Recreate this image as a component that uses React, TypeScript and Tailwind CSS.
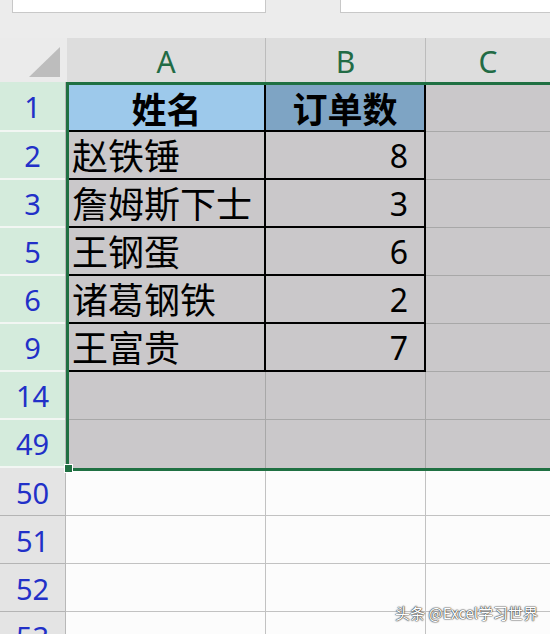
import React from "react";

const CJK = { fontFamily: '"Noto Sans CJK SC", "Noto Sans", sans-serif' };
const NUM = { fontFamily: '"Noto Sans", "Open Sans", sans-serif' };

type R = { n: string; a: string; b: string };
const tableRows: R[] = [
  { n: "2", a: "赵铁锤", b: "8" },
  { n: "3", a: "詹姆斯下士", b: "3" },
  { n: "5", a: "王钢蛋", b: "6" },
  { n: "6", a: "诸葛钢铁", b: "2" },
  { n: "9", a: "王富贵", b: "7" },
];

function RowHead({ n, h, sel }: { n: string; h: string; sel?: boolean }) {
  return (
    <div
      className={`${h} flex items-center justify-center pt-[3px] text-[29px] leading-[1.2] text-[#2230c8] ${
        sel ? "bg-[#d4ebdc] border-b-2 border-[#f2f6f3]" : "bg-[#e4e4e4] border-b border-[#b4b4b4]"
      }`}
      style={NUM}
    >
      {n}
    </div>
  );
}

export default function App() {
  return (
    <div className="relative h-[634px] w-[550px] overflow-hidden bg-[#ececec] select-none">
      {/* top bar */}
      <div className="flex h-[38px] items-start">
        <div className="ml-[12px] h-[13px] w-[254px] border-x border-b border-[#c8c8c8] bg-white" />
        <div className="ml-[74px] h-[13px] flex-1 border-l border-b border-[#c8c8c8] bg-white" />
      </div>

      {/* column headers */}
      <div className="flex h-[44px]">
        <div className="relative w-[67px] bg-[#ebebeb]">
          <svg className="absolute left-[29px] top-[9px]" width="32" height="31" viewBox="0 0 32 31">
            <polygon points="0,30 31,0 31,30" fill="#bdbdbd" />
          </svg>
        </div>
        <div className="flex w-[199px] items-center justify-center border-r border-[#bcbcbc] bg-[#dddddd] pt-[2px] text-[30px] text-[#226b45]" style={NUM}>
          A
        </div>
        <div className="flex w-[160px] items-center justify-center border-r border-[#bcbcbc] bg-[#dddddd] pt-[2px] text-[30px] text-[#226b45]" style={NUM}>
          B
        </div>
        <div className="flex flex-1 items-center justify-center bg-[#dddddd] pt-[2px] text-[30px] text-[#226b45]" style={NUM}>
          C
        </div>
      </div>

      {/* body */}
      <div className="flex">
        {/* row headers */}
        <div className="flex w-[66px] flex-col border-r border-[#b8b8b8]">
          <RowHead n="1" h="h-[50px]" sel />
          {tableRows.map((r) => (
            <RowHead key={r.n} n={r.n} h="h-[48px]" sel />
          ))}
          <RowHead n="14" h="h-[48px]" sel />
          <RowHead n="49" h="h-[48px]" sel />
          <RowHead n="50" h="h-[48px]" />
          <RowHead n="51" h="h-[48px]" />
          <RowHead n="52" h="h-[48px]" />
          <RowHead n="53" h="h-[48px]" />
        </div>

        {/* cells */}
        <div className="flex flex-1 flex-col">
          <div className="relative border-y-[3px] border-l-[3px] border-[#1f7042] bg-[#cac8ca]">
            {/* header row */}
            <div className="flex h-[47px]">
              <div className="flex w-[197px] items-center justify-center border-r-2 border-b-2 border-black bg-[#9dc9eb] text-[35px] leading-[1.2] font-bold text-black" style={CJK}>
                姓名
              </div>
              <div className="flex w-[160px] items-center justify-center border-r-2 border-b-2 border-black bg-[#7ea4c4] text-[35px] leading-[1.2] font-bold text-black" style={CJK}>
                订单数
              </div>
              <div className="flex-1 border-b border-[#a8a8a8]" />
            </div>
            {tableRows.map((r) => (
              <div key={r.n} className="flex h-[48px]">
                <div className="flex w-[197px] items-center border-r-2 border-b-2 border-black pl-[3px] text-[36px] leading-[1.2] whitespace-nowrap text-black" style={CJK}>
                  {r.a}
                </div>
                <div className="flex w-[160px] items-center justify-end border-r-2 border-b-2 border-black pt-[2px] pr-[16px] text-[32px] leading-[1.2] text-black" style={NUM}>
                  {r.b}
                </div>
                <div className="flex-1 border-b border-[#a8a8a8]" />
              </div>
            ))}
            <div className="flex h-[48px]">
              <div className="w-[197px] border-r border-b border-[#a8a8a8]" />
              <div className="w-[160px] border-r border-b border-[#a8a8a8]" />
              <div className="flex-1 border-b border-[#a8a8a8]" />
            </div>
            <div className="flex h-[48px]">
              <div className="w-[197px] border-r border-[#a8a8a8]" />
              <div className="w-[160px] border-r border-[#a8a8a8]" />
              <div className="flex-1" />
            </div>
            {/* fill handle */}
            <div className="absolute -bottom-[5px] -left-[5px] h-[9px] w-[9px] border border-white bg-[#1f7042]" />
          </div>

          {/* unselected rows */}
          {["h-[45px]", "h-[48px]", "h-[48px]", "h-[48px]"].map((h, i) => (
            <div key={i} className={`flex ${h} bg-[#fcfcfc]`}>
              <div className="w-[200px] border-r border-b border-[#c2c2c2]" />
              <div className="w-[160px] border-r border-b border-[#c2c2c2]" />
              <div className="flex-1 border-b border-[#c2c2c2]" />
            </div>
          ))}
        </div>
      </div>

      {/* watermark */}
      <div
        className="absolute bottom-[10px] right-[12px] text-[15px] text-white"
        style={{
          ...CJK,
          textShadow: "0 0 1px #333, 0 0 1px #333, 0 0 2px #555",
        }}
      >
        头条 @Excel学习世界
      </div>
    </div>
  );
}
